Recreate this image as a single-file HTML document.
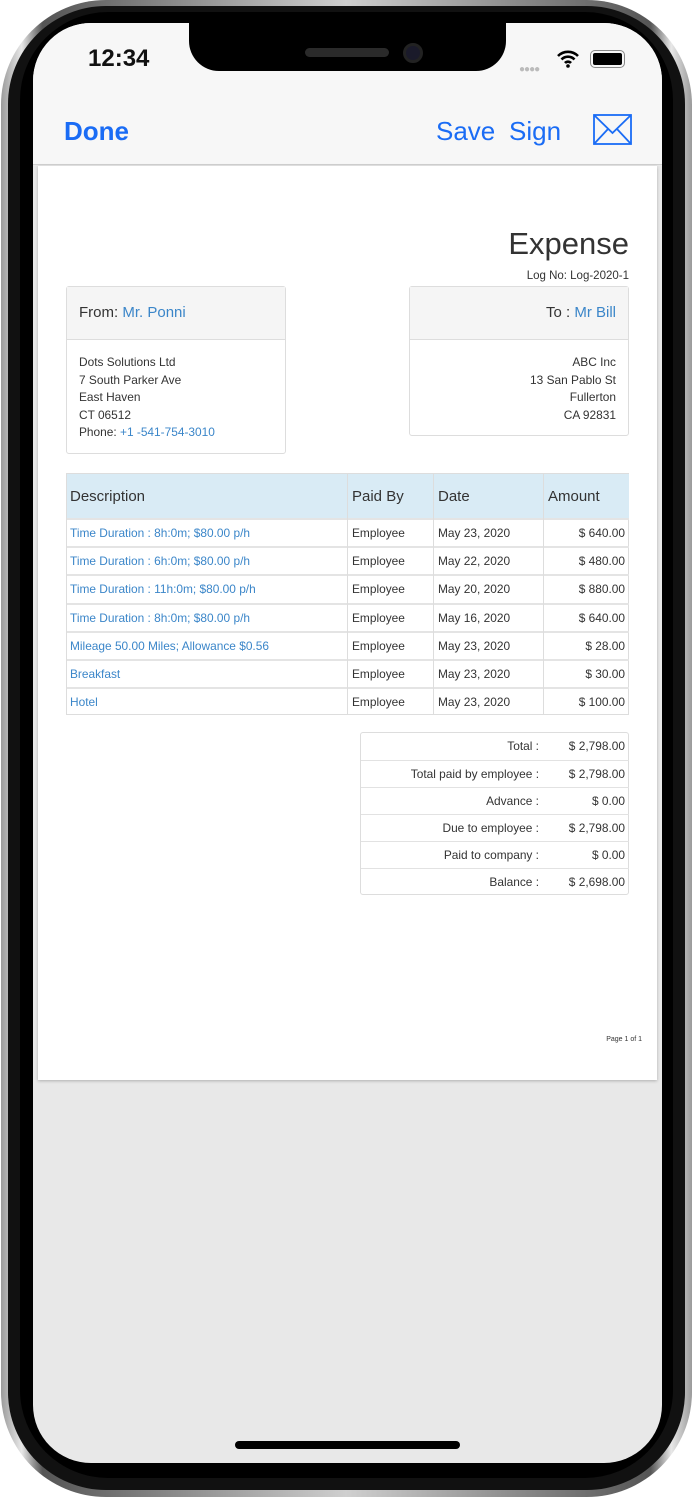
<!DOCTYPE html>
<html><head><meta charset="utf-8"><style>
*{margin:0;padding:0;box-sizing:border-box}
body{width:693px;height:1500px;background:#fff;position:relative;overflow:hidden;font-family:"Liberation Sans",Arial,sans-serif}
.a{position:absolute}
.frame{left:1px;top:0;width:691px;height:1497px;border-radius:105px;background:linear-gradient(90deg,#9a9a9a,#e8e8e8 3%,#555 6%,#cfcfcf 50%,#555 94%,#e8e8e8 97%,#9a9a9a)}
.bez{left:8px;top:6px;width:677px;height:1484px;border-radius:98px;background:#111}
.bez2{left:20px;top:12px;width:653px;height:1466px;border-radius:88px;background:#000}
.screen{left:33px;top:23px;width:629px;height:1440px;border-radius:58px;background:#e8e8e8;overflow:hidden}
.nav{left:0;top:0;width:629px;height:142px;background:#f7f7f7;border-bottom:1px solid #d0d0d0}
.blue{color:#1a6cf5}
.lk{color:#3b86c9}
.page{left:5px;top:143px;width:619px;height:914px;background:#fff;box-shadow:0 1px 3px rgba(0,0,0,.25)}
.t{font-size:11.9px;color:#333}
.box{border:1px solid #ddd;border-radius:3px;background:#fff}
.row{position:absolute;left:0;width:562px;height:28px;border-top:2px solid #e4e4e4;font-size:11.9px;color:#333}
.row span{position:absolute;top:6px}
.vl{position:absolute;top:0;width:1px;background:#ddd}
.sr{position:absolute;left:0;width:268px;height:27px;border-top:1px solid #e2e2e2;font-size:11.9px;color:#333}
.sr span{position:absolute;top:6px;text-align:right}
</style></head><body>
<div class="a frame"></div><div class="a bez"></div><div class="a bez2"></div>
<div class="a screen">
 <div class="a nav">
  <div class="a" style="left:55px;top:22px;font-size:24px;color:#111;font-weight:600">12:34</div>
  <div class="a" style="left:156px;top:-2px;width:317px;height:50px;background:#000;border-radius:0 0 30px 30px"></div>
  <div class="a" style="left:272px;top:25px;width:84px;height:9px;border-radius:5px;background:#2a2a2a"></div>
  <div class="a" style="left:370px;top:20px;width:20px;height:20px;border-radius:50%;background:#1a1a2a;border:3px solid #222"></div>
  <div class="a" style="left:486px;top:41px;font-size:10px;color:#bbb;letter-spacing:-1px">●●●●</div>
  <svg class="a" style="left:523px;top:27px" width="24" height="18" viewBox="0 0 24 18"><path d="M2 6a14 14 0 0 1 20 0M5.5 9.5a9 9 0 0 1 13 0M9 13a4 4 0 0 1 6 0" stroke="#000" stroke-width="2.6" fill="none"/><circle cx="12" cy="16" r="1.8"/></svg>
  <div class="a" style="left:557px;top:27px;width:35px;height:18px;border:1.5px solid #888;border-radius:5px;padding:2px"><div style="width:100%;height:100%;background:#000;border-radius:2px"></div></div>
  <div class="a blue" style="left:31px;top:93px;font-size:26px;font-weight:bold">Done</div>
  <div class="a blue" style="left:403px;top:93px;font-size:26px">Save</div>
  <div class="a blue" style="left:476px;top:93px;font-size:26px">Sign</div>
  <svg class="a" style="left:560px;top:91px" width="39" height="31" viewBox="0 0 39 31"><rect x="1" y="1" width="37" height="29" fill="none" stroke="#1a6cf5" stroke-width="1.8"/><path d="M1 1L19.5 19L38 1M1 30L15 15M38 30L24 15" fill="none" stroke="#1a6cf5" stroke-width="1.8"/></svg>
 </div>
 <div class="a page">
  <div class="a" style="right:28px;top:60px;font-size:31px;color:#333">Expense</div>
  <div class="a t" style="right:28px;top:104px;font-size:11.5px">Log No: Log-2020-1</div>
  <div class="a box" style="left:28px;top:120px;width:220px;height:168px">
   <div style="height:53px;background:#f5f5f5;border-bottom:1px solid #ddd;padding:17px 12px;font-size:15px;color:#333">From: <span class="lk">Mr. Ponni</span></div>
   <div class="t" style="padding:14px 12px;line-height:17.6px">Dots Solutions Ltd<br>7 South Parker Ave<br>East Haven<br>CT 06512<br>Phone: <span class="lk">+1 -541-754-3010</span></div>
  </div>
  <div class="a box" style="left:371px;top:120px;width:220px;height:150px;text-align:right">
   <div style="height:53px;background:#f5f5f5;border-bottom:1px solid #ddd;padding:17px 12px;font-size:15px;color:#333">To : <span class="lk">Mr Bill</span></div>
   <div class="t" style="padding:14px 12px;line-height:17.6px">ABC Inc<br>13 San Pablo St<br>Fullerton<br>CA 92831</div>
  </div>
  <div class="a" style="left:28px;top:307px;width:563px;height:242px;border:1px solid #ddd">
   <div class="a" style="left:0;top:0;width:562px;height:44px;background:#d9ebf5;font-size:15px;color:#333">
    <span class="a" style="left:3px;top:14px">Description</span><span class="a" style="left:285px;top:14px">Paid By</span><span class="a" style="left:371px;top:14px">Date</span><span class="a" style="left:481px;top:14px">Amount</span>
   </div>
   <div class="row" style="top:44px"><span class="lk" style="left:3px">Time Duration : 8h:0m; $80.00 p/h</span><span style="left:285px">Employee</span><span style="left:371px">May 23, 2020</span><span style="right:4px">$ 640.00</span></div>
   <div class="row" style="top:72px"><span class="lk" style="left:3px">Time Duration : 6h:0m; $80.00 p/h</span><span style="left:285px">Employee</span><span style="left:371px">May 22, 2020</span><span style="right:4px">$ 480.00</span></div>
   <div class="row" style="top:100px"><span class="lk" style="left:3px">Time Duration : 11h:0m; $80.00 p/h</span><span style="left:285px">Employee</span><span style="left:371px">May 20, 2020</span><span style="right:4px">$ 880.00</span></div>
   <div class="row" style="top:129px"><span class="lk" style="left:3px">Time Duration : 8h:0m; $80.00 p/h</span><span style="left:285px">Employee</span><span style="left:371px">May 16, 2020</span><span style="right:4px">$ 640.00</span></div>
   <div class="row" style="top:157px"><span class="lk" style="left:3px">Mileage 50.00 Miles; Allowance $0.56</span><span style="left:285px">Employee</span><span style="left:371px">May 23, 2020</span><span style="right:4px">$ 28.00</span></div>
   <div class="row" style="top:185px"><span class="lk" style="left:3px">Breakfast</span><span style="left:285px">Employee</span><span style="left:371px">May 23, 2020</span><span style="right:4px">$ 30.00</span></div>
   <div class="row" style="top:213px"><span class="lk" style="left:3px">Hotel</span><span style="left:285px">Employee</span><span style="left:371px">May 23, 2020</span><span style="right:4px">$ 100.00</span></div>
   <div class="vl" style="left:280px;height:241px"></div><div class="vl" style="left:366px;height:241px"></div><div class="vl" style="left:476px;height:241px"></div>
  </div>
  <div class="a box" style="left:322px;top:566px;width:269px;height:163px">
   <div class="sr" style="top:0;border-top:0"><span style="right:90px">Total :</span><span style="right:4px">$ 2,798.00</span></div>
   <div class="sr" style="top:27px"><span style="right:90px">Total paid by employee :</span><span style="right:4px">$ 2,798.00</span></div>
   <div class="sr" style="top:54px"><span style="right:90px">Advance :</span><span style="right:4px">$ 0.00</span></div>
   <div class="sr" style="top:81px"><span style="right:90px">Due to employee :</span><span style="right:4px">$ 2,798.00</span></div>
   <div class="sr" style="top:108px"><span style="right:90px">Paid to company :</span><span style="right:4px">$ 0.00</span></div>
   <div class="sr" style="top:135px"><span style="right:90px">Balance :</span><span style="right:4px">$ 2,698.00</span></div>
  </div>
  <div class="a" style="right:15px;top:870px;font-size:7px;color:#333">Page 1 of 1</div>
 </div>
 <div class="a" style="left:202px;top:1418px;width:225px;height:8px;border-radius:4px;background:#000"></div>
</div>
</body></html>
